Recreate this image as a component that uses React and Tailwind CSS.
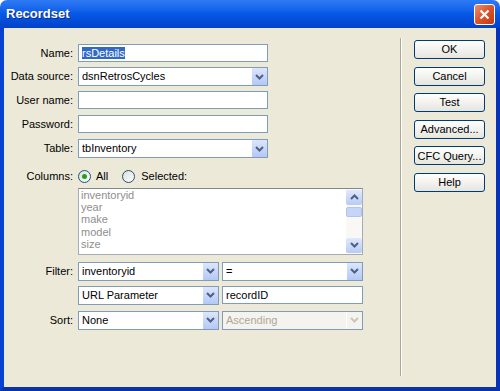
import React from "react";

function Arrow({ disabled }) {
    return (
        <div className={"w-[16px] h-full flex items-center justify-center border-l border-white " + (disabled ? "bg-[#f4f3ee]" : "bg-gradient-to-b from-[#dbe6fc] to-[#b4c8f6]")}>
            <svg width="9" height="6" viewBox="0 0 9 6">
                <path d="M1 1 L4.5 4.5 L8 1" fill="none" stroke={disabled ? "#c9c7ba" : "#4d6185"} strokeWidth="2" />
            </svg>
        </div>
    );
}

function Select({ value, w, disabled }) {
    return (
        <div className={"flex h-[19px] border border-[#7f9db9] " + w + (disabled ? " bg-[#f4f3ee] text-[#aca899]" : " bg-white text-black")}>
            <div className="flex-1 pl-[3px] leading-[17px] truncate">{value}</div>
            <Arrow disabled={disabled} />
        </div>
    );
}

function Input({ children, w }) {
    return (
        <div className={"h-[18px] border border-[#7f9db9] bg-white pl-[3px] leading-[16px] " + w}>{children}</div>
    );
}

function Row({ label, children, className }) {
    return (
        <div className={"flex items-center " + (className || "")}>
            <div className="w-[69px] text-right pr-0">{label}</div>
            <div className="ml-[5px] flex gap-[3px]">{children}</div>
        </div>
    );
}

function Radio({ checked }) {
    return (
        <div className="w-[13px] h-[13px] rounded-full border border-[#1c5180] bg-gradient-to-br from-[#dcdcd7] to-white flex items-center justify-center">
            {checked && <div className="w-[5px] h-[5px] rounded-full bg-[#21a121]" />}
        </div>
    );
}

function Btn({ children }) {
    return (
        <div className="w-[71px] h-[19px] rounded-[3px] border border-[#003c74] bg-gradient-to-b from-white to-[#e6e5de] flex items-center justify-center">
            {children}
        </div>
    );
}

export default function App() {
    const cols = ["inventoryid", "year", "make", "model", "size"];
    return (
        <div className="w-[500px] h-[391px] flex flex-col text-[11px] text-black" style={{ fontFamily: '"Liberation Sans", Arial, sans-serif' }}>
            <div className="h-[28px] flex items-center justify-between pl-[6px] pr-[5px] rounded-t-[7px] bg-gradient-to-b from-[#2f7bf5] via-[#0558e6] to-[#0242c9]">
                <span className="text-white font-bold text-[13px] [text-shadow:1px_1px_#0a2c8a]">Recordset</span>
                <div className="w-[21px] h-[21px] rounded-[3px] border border-white bg-gradient-to-br from-[#e7906f] via-[#d9532b] to-[#c03b12] flex items-center justify-center">
                    <svg width="11" height="11" viewBox="0 0 11 11">
                        <path d="M1.5 1.5 L9.5 9.5 M9.5 1.5 L1.5 9.5" stroke="white" strokeWidth="2.2" />
                    </svg>
                </div>
            </div>
            <div className="flex-1 flex bg-[#ece9d8] border-l-[4px] border-r-[4px] border-b-[4px] border-l-[#0842d2] border-r-[#0832b8] border-b-[#0834a8]">
                <div className="w-[396px] flex flex-col pt-[16px]">
                    <Row label="Name:">
                        <Input w="w-[190px]">
                            <span className="bg-[#316ac5] text-white">rsDetails</span>
                        </Input>
                    </Row>
                    <Row label="Data source:" className="mt-[5px]">
                        <Select value="dsnRetrosCycles" w="w-[190px]" />
                    </Row>
                    <Row label="User name:" className="mt-[5px]">
                        <Input w="w-[190px]" />
                    </Row>
                    <Row label="Password:" className="mt-[6px]">
                        <Input w="w-[190px]" />
                    </Row>
                    <Row label="Table:" className="mt-[6px]">
                        <Select value="tbInventory" w="w-[190px]" />
                    </Row>
                    <Row label="Columns:" className="mt-[10px]">
                        <div className="flex items-center">
                            <Radio checked />
                            <span className="ml-[5px]">All</span>
                            <div className="ml-[14px]"><Radio /></div>
                            <span className="ml-[6px]">Selected:</span>
                        </div>
                    </Row>
                    <div className="ml-[74px] mt-[3px] w-[285px] h-[67px] border border-[#a5acb5] border-t-[#828790] bg-white flex">
                        <div className="flex-1 pl-[2px] text-[#8e8e8e] leading-[12.4px]">
                            {cols.map((c) => <div key={c}>{c}</div>)}
                        </div>
                        <div className="w-[16px] bg-[#f9f8f4] flex flex-col justify-between py-[1px]">
                            <div>
                                <div className="h-[15px] rounded-[2px] bg-gradient-to-b from-[#e0e9fc] to-[#b8cbf5] flex items-center justify-center">
                                    <svg width="9" height="6" viewBox="0 0 9 6"><path d="M1 5 L4.5 1.5 L8 5" fill="none" stroke="#4d6185" strokeWidth="2" /></svg>
                                </div>
                                <div className="h-[10px] mt-[2px] rounded-[2px] bg-[#c6d5f7] border border-[#b0c4f0]" />
                            </div>
                            <div className="h-[15px] rounded-[2px] bg-gradient-to-b from-[#e0e9fc] to-[#b8cbf5] flex items-center justify-center">
                                <svg width="9" height="6" viewBox="0 0 9 6"><path d="M1 1 L4.5 4.5 L8 1" fill="none" stroke="#4d6185" strokeWidth="2" /></svg>
                            </div>
                        </div>
                    </div>
                    <Row label="Filter:" className="mt-[7px]">
                        <Select value="inventoryid" w="w-[141px]" />
                        <Select value="=" w="w-[141px]" />
                    </Row>
                    <Row label="" className="mt-[5px]">
                        <Select value="URL Parameter" w="w-[141px]" />
                        <Input w="w-[141px]">recordID</Input>
                    </Row>
                    <Row label="Sort:" className="mt-[6px]">
                        <Select value="None" w="w-[141px]" />
                        <Select value="Ascending" w="w-[141px]" disabled />
                    </Row>
                </div>
                <div className="mt-[10px] mb-[11px] w-[2px] border-l border-[#aca899] border-r border-r-white" />
                <div className="ml-[12px] pt-[12px] flex flex-col gap-[7.6px]">
                    <Btn>OK</Btn>
                    <Btn>Cancel</Btn>
                    <Btn>Test</Btn>
                    <Btn>Advanced...</Btn>
                    <Btn>CFC Query...</Btn>
                    <Btn>Help</Btn>
                </div>
            </div>
        </div>
    );
}
